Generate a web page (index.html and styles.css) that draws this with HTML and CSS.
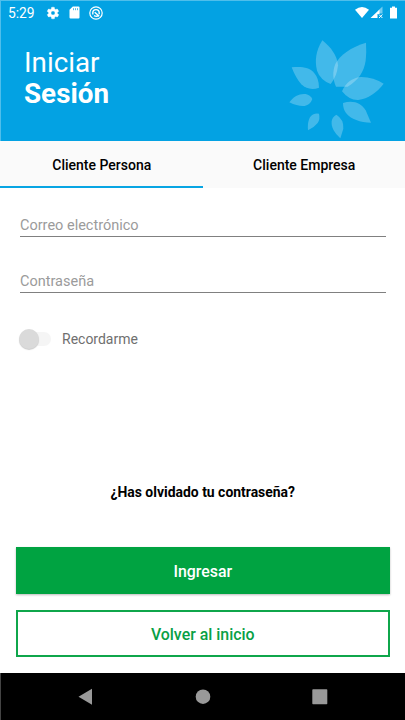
FILE: index.html
```
<!DOCTYPE html>
<html lang="es">
<head>
<meta charset="utf-8">
<title>Iniciar Sesión</title>
<link rel="stylesheet" href="styles.css">
</head>
<body>
<main class="screen">
  <header class="header">
    <div class="status">
      <span class="clock">5:29</span>
      <svg class="gear" width="14" height="14" viewBox="0 0 24 24"><path fill="#fff" stroke="#fff" stroke-width=".6" d="M19.4 13c.1-.3.1-.6.1-1s0-.7-.1-1l2.1-1.6c.2-.2.3-.4.1-.7l-2-3.4c-.1-.2-.4-.3-.6-.2l-2.5 1c-.5-.4-1.1-.7-1.7-1l-.4-2.6c0-.3-.2-.5-.5-.5h-4c-.2 0-.5.2-.5.5L9 5.100c-.6.3-1.200.6-1.700 1l-2.500-1c-.2-.1-.5 0-.6.2l-2 3.400c-.1.300 0 .5.100.7L4.500 11c-.1.300-.1.700-.1 1s0 .7.1 1l-2.100 1.600c-.2.200-.3.400-.1.700l2 3.400c.1.200.4.300.6.200l2.500-1c.5.400 1.100.700 1.700 1l.4 2.600c0 .3.300.5.500.5h4c.3 0 .5-.2.5-.5l.4-2.600c.6-.3 1.200-.6 1.700-1l2.500 1c.2.100.5 0 .6-.2l2-3.400c.1-.3.100-.5-.1-.7zM12 15.500a3.500 3.500 0 1 1 0-7 3.500 3.500 0 0 1 0 7z"/></svg>
      <svg class="card" width="11" height="13" viewBox="0 0 11 13"><path fill="#fff" d="M3.800.5H9.500Q10.500.5 10.500 1.500V11.500Q10.500 12.500 9.500 12.500H1.500Q.5 12.500.5 11.500V3.800z"/><path stroke="#03a2e3" stroke-width=".7" d="M4.500 2.200v2M6.500 2.200v2M8.500 2.200v2"/></svg>
      <svg class="sync" width="14" height="14" viewBox="0 0 14 14" fill="none" stroke="#fff"><circle cx="7" cy="7" r="6.200" stroke-width="1.200"/><path stroke-width="1.400" d="M3.800 8.500V6.800A3.200 3.200 0 0 1 10.200 6.800V8.200M5 9.600Q7.500 11 10 9.700M5.700 6.300l4.500 4"/></svg>
      <svg class="signals" width="45" height="14" viewBox="0 0 45 14" fill="#fff"><path d="M0 3.700Q7-1.900 14 3.700L7 12z"/><path fill-opacity=".45" d="M23.500 4.300L27.500.5V7.500H23.500z"/><path d="M15.500 12L24.500 3.400V8H22.500V12z"/><path fill="none" stroke="#fff" stroke-width="1" d="M24 8.500l3.400 3.500m0-3.500l-3.400 3.500"/><path d="M35 1.800h2V.5h3v1.300h2V12.500h-7z"/></svg>
    </div>
    <h1 class="title">Iniciar<strong>Sesión</strong></h1>
    <svg class="flower" width="115" height="115" viewBox="0 0 345 345" fill="#fff" fill-opacity=".25">
      <path d="M127 31C107 63 104 93 111 122Q121 150 152 162Q171 139 174 106C171 76 153 52 127 31z"/>
      <path d="M258 38C213 51 180 75 166 102C157 125 158 148 168 170H203C234 151 252 126 257 92Q260 65 258 38z"/>
      <path d="M186 184C197 158 218 142 244 141Q281 142 311 161C290 188 264 206 235 210Q207 211 186 184z"/>
      <path d="M189 219C219 209 244 219 257 241L273 278C240 277 213 268 198 249Q189 237 189 219z"/>
      <path d="M169 254Q192 268 190 296L181 325C162 307 153 291 155 273Q157 261 169 254z"/>
      <path d="M117 251Q121 267 113 279Q103 292 84 301C82 277 87 254 105 251Q111 250 117 251z"/>
      <path d="M28 217C41 198 59 190 77 192Q91 195 97 207Q91 224 74 228Q54 230 28 217z"/>
      <path d="M35 112C67 109 88 113 102 128Q117 145 117 173C98 180 78 177 64 163Q47 144 35 112z"/>
    </svg>
  </header>
  <nav class="tabs"><a class="tab active">Cliente Persona</a><a class="tab">Cliente Empresa</a></nav>
  <form class="form">
    <div class="field"><span>Correo electrónico</span></div>
    <div class="field"><span>Contraseña</span></div>
    <div class="remember"><i class="switch"><b class="thumb"></b></i><span>Recordarme</span></div>
    <a class="forgot">¿Has olvidado tu contraseña?</a>
    <div class="button primary">Ingresar</div>
    <div class="button outline">Volver al inicio</div>
  </form>
  <footer class="navbar">
    <svg width="16" height="18" viewBox="0 0 16 18"><path d="M.5 8.700L14 .700V16.700z" fill="#999"/></svg>
    <svg width="16" height="18" viewBox="0 0 16 18"><circle cx="8" cy="8.700" r="7.300" fill="#999"/></svg>
    <svg width="16" height="18" viewBox="0 0 16 18"><rect x=".3" y="1.200" width="15" height="15" rx=".7" fill="#999"/></svg>
  </footer>
</main>
</body>
</html>
```
FILE: styles.css
```
* { box-sizing: border-box; }
body { margin: 0; background: #fff; font-family: Roboto, sans-serif; }
.screen { width: 405px; height: 720px; display: flex; flex-direction: column; overflow: hidden; }
.header { position: relative; height: 141px; background: #03a2e3; color: #fff; overflow: hidden; box-shadow: inset 1px 1px #4fbeeb; }
.status { display: flex; align-items: center; height: 25px; padding-left: 8px; }
.clock { width: 38px; font-size: 13.8px; line-height: 26px; }
.card { margin-left: 9px; }
.sync { margin-left: 9px; }
.signals { margin-left: 252px; }
.title { margin: 22px 0 0 24px; font-size: 27.800px; line-height: 31px; font-weight: 400; }
.title strong { display: block; font-weight: 700; }
.flower { position: absolute; left: 280px; top: 30px; }
.tabs { display: flex; height: 47px; }
.tab { width: 202.5px; padding-left: 1px; background: #fafafa; font-size: 14px; font-weight: 500; line-height: 48px; text-align: center; color: #000; }
.tab.active { border-bottom: 2px solid #08a5e3; }
.form { flex: 1; display: flex; flex-direction: column; padding: 24px 15.5px 0 16px; }
.field { height: 25px; margin: 0 3.500px 31px 4px; border-bottom: 1px solid #808080; font-size: 14.500px; line-height: 27px; color: #9b9b9b; }
.remember { display: flex; align-items: center; height: 22px; margin: 4px 0 0 3px; font-size: 14px; color: #6f6f6f; }
.switch { display: flex; align-items: center; width: 31.5px; height: 14px; margin-right: 11.5px; border-radius: 7px; background: linear-gradient(90deg, transparent 8px, #f5f5f5 8px); }
.thumb { width: 20px; height: 20px; flex: none; border-radius: 50%; background: #dadada; box-shadow: 0 1px 1px #ccc; }
.forgot { margin-top: 133px; text-align: center; font-size: 13.950px; line-height: 18px; font-weight: 700; color: #000; }
.button { height: 47px; text-align: center; font-size: 15.900px; font-weight: 500; line-height: 49px; }
.primary { margin-top: 46px; background: #00a341; color: #fff; box-shadow: 0 1px 2px #bbb; }
.outline { margin-top: 16px; border: 2px solid #0fa64b; line-height: 45px; color: #08a045; }
.navbar { height: 47px; background: #000; display: flex; align-items: center; justify-content: center; gap: 101px; box-shadow: inset 1px 0 #444; }
```
